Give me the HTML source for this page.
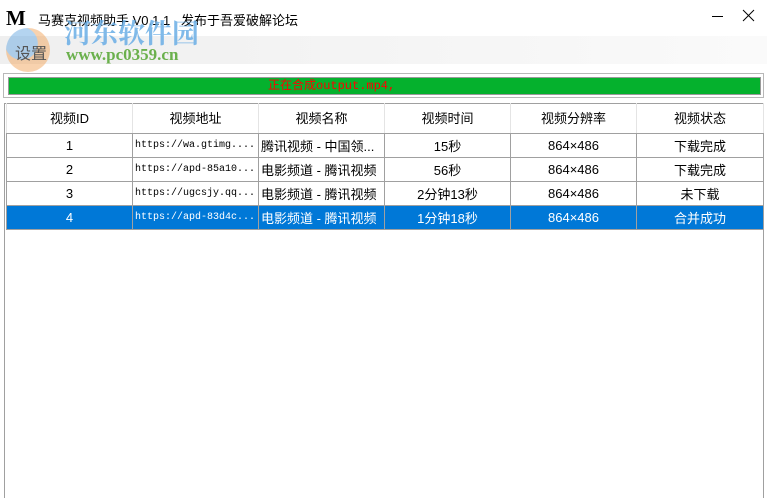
<!DOCTYPE html>
<html><head><meta charset="utf-8"><style>
*{margin:0;padding:0;box-sizing:border-box}
body{width:767px;height:495px;background:#fff;position:relative;overflow:hidden;font-family:"Liberation Sans","Noto Sans CJK SC",sans-serif;font-size:12px;color:#000}
.abs{position:absolute}
.menu{left:0;top:36px;width:767px;height:28px;background:linear-gradient(90deg,#efefef,#fafafa)}
.prog{left:3px;top:73px;width:761px;height:25px;border:1px solid #b8b8b8;background:#fff}
.green{left:8px;top:77px;width:753px;height:18px;background:#05b12d;border:1px solid #9a9a9a}
.ptxt{left:268px;top:78px;color:#f00;font-family:"Liberation Mono","Noto Sans CJK SC",monospace;font-size:12px;line-height:16px}
.tbl{left:4px;top:103px;width:760px;height:395px;border:1px solid #a0a0a0;border-bottom:none}
table{border-collapse:collapse;position:absolute;left:6px;top:103px;table-layout:fixed;width:757px}
td,th{border:1px solid #a0a0a0;text-align:center;font-weight:normal;font-size:13px;white-space:nowrap;overflow:hidden}
th{height:30px;border-top:none;border-color:#e4e4e4;border-bottom-color:#a0a0a0}
td{height:24px}
td.u{font-family:"Liberation Mono","Noto Sans CJK SC",monospace;font-size:10px;text-align:left;padding-left:2px}
td.n{text-align:left;padding-left:2px;font-size:13px}
tr.sel td{background:#0078d7;color:#fff}
</style></head><body>
<div class="abs" style="left:6px;top:6px;font:bold 21px 'Liberation Serif',serif;letter-spacing:-2px">M</div>
<div class="abs" style="left:38px;top:10px;font-size:13px">马赛克视频助手 V0.1.1  &nbsp; 发布于吾爱破解论坛</div>
<svg class="abs" style="left:710px;top:8px" width="50" height="16"><line x1="2" y1="8.5" x2="13" y2="8.5" stroke="#000" stroke-width="1"/><line x1="33" y1="2" x2="44" y2="13" stroke="#000" stroke-width="1"/><line x1="44" y1="2" x2="33" y2="13" stroke="#000" stroke-width="1"/></svg>
<div class="abs menu"></div>
<div class="abs" style="left:6px;top:28px;width:44px;height:44px;border-radius:50%;background:radial-gradient(circle at 35% 35%,#6aa8e0 40%,#f2a65c 41%);opacity:.5"></div>
<div class="abs" style="left:15px;top:40px;font-size:16px;color:#555">设置</div>
<div class="abs" style="left:64px;top:12px;font:bold 27px 'Noto Serif CJK SC',serif;color:#6aaee6;opacity:.85">河东软件园</div>
<div class="abs" style="left:66px;top:45px;font:bold 17px 'Liberation Serif',serif;color:#6ab04c">www.pc0359.cn</div>
<div class="abs prog"></div>
<div class="abs green"></div>
<div class="abs ptxt">正在合成output.mp4,</div>
<div class="abs tbl"></div>
<table>
<colgroup><col style="width:126px"><col style="width:126px"><col style="width:126px"><col style="width:126px"><col style="width:126px"><col style="width:127px"></colgroup>
<tr><th>视频ID</th><th>视频地址</th><th>视频名称</th><th>视频时间</th><th>视频分辨率</th><th>视频状态</th></tr>
<tr><td>1</td><td class="u">https://wa.gtimg....</td><td class="n">腾讯视频 - 中国领...</td><td>15秒</td><td>864×486</td><td>下载完成</td></tr>
<tr><td>2</td><td class="u">https://apd-85a10...</td><td class="n">电影频道 - 腾讯视频</td><td>56秒</td><td>864×486</td><td>下载完成</td></tr>
<tr><td>3</td><td class="u">https://ugcsjy.qq...</td><td class="n">电影频道 - 腾讯视频</td><td>2分钟13秒</td><td>864×486</td><td>未下载</td></tr>
<tr class="sel"><td>4</td><td class="u">https://apd-83d4c...</td><td class="n">电影频道 - 腾讯视频</td><td>1分钟18秒</td><td>864×486</td><td>合并成功</td></tr>
</table>
</body></html>
